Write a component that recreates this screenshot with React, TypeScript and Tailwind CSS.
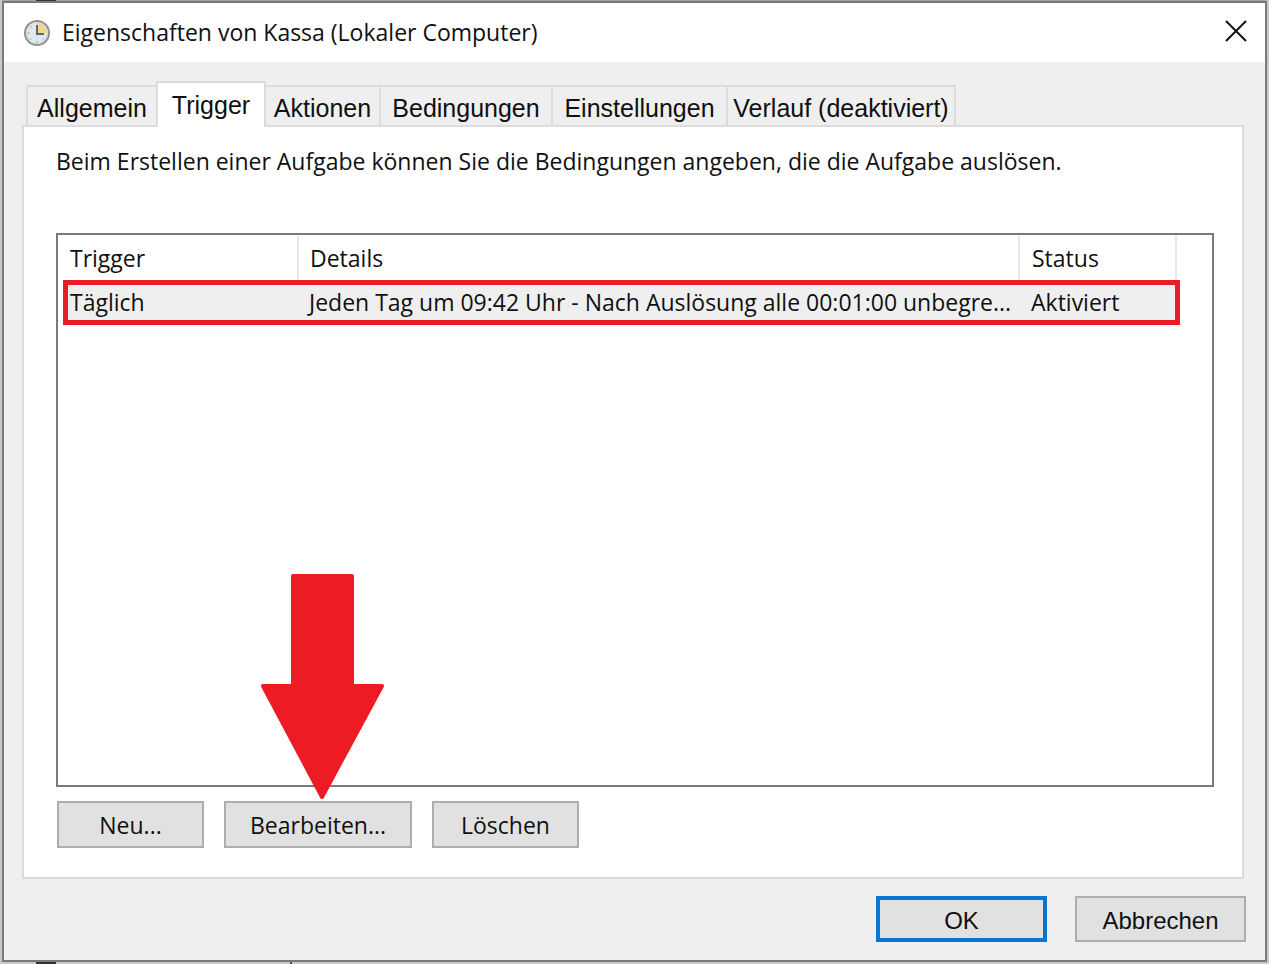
import { useState } from 'react';

const tabs = [
  { label: 'Allgemein', width: 'w-[132px]' },
  { label: 'Trigger', width: 'w-[110px]' },
  { label: 'Aktionen', width: 'w-[115px]' },
  { label: 'Bedingungen', width: 'w-[172px]' },
  { label: 'Einstellungen', width: 'w-[175px]' },
  { label: 'Verlauf (deaktiviert)', width: 'w-[228px]' },
];

const triggers = [
  {
    name: 'Täglich',
    details: 'Jeden Tag um 09:42 Uhr - Nach Auslösung alle 00:01:00 unbegre...',
    status: 'Aktiviert',
  },
];

const buttonBase = 'h-[47px] border-2 border-[#adadad] bg-[#e1e1e1]';

function ClockIcon() {
  return (
    <svg viewBox="0 0 28 28" className="h-7 w-7" aria-hidden="true">
      <circle cx="14" cy="14" r="12" fill="#dde9ef" stroke="#92928e" strokeWidth="2" />
      <path d="M14 14V3.500a10.500 10.500 0 0 1 10.500 10.500z" fill="#f5d48e" />
      <circle cx="14" cy="14" r="10.5" fill="none" stroke="#d3dbdd" strokeWidth="1" />
      <path d="M14 6v9h7" fill="none" stroke="#5b6670" strokeWidth="2" />
      <path d="M14 22v2M4.500 14h2M7.500 7.500l1 1M7.500 20.500l1-1M20.500 20.500l-1-1" stroke="#8e9ba3" strokeWidth="1" />
    </svg>
  );
}

function TitleBar() {
  return (
    <header className="flex h-[59px] items-center bg-white pl-[19px] pr-3.5">
      <ClockIcon />
      <h1 className="ml-[11px] flex-1 pb-0.5">Eigenschaften von Kassa (Lokaler Computer)</h1>
      <button type="button" aria-label="Schließen" className="p-1 pb-2">
        <svg viewBox="0 0 22 22" className="h-[22px] w-[22px]" aria-hidden="true">
          <path d="M1 1l20 20M21 1L1 21" stroke="#111" strokeWidth="2" />
        </svg>
      </button>
    </header>
  );
}

function TriggerList() {
  return (
    <div className="relative flex-1 border-2 border-[#7a7a7a] bg-white pl-[5px] pr-[35px]">
      <table className="w-full table-fixed border-collapse text-left">
        <thead>
          <tr className="h-[45px]">
            <th className="w-[235px] border-r-2 border-[#e8e8e8] pl-[7px] font-normal">Trigger</th>
            <th className="border-r-2 border-[#e8e8e8] pl-[11px] font-normal">Details</th>
            <th className="w-[157px] border-r-2 border-[#e8e8e8] pl-3 font-normal">Status</th>
          </tr>
        </thead>
        <tbody>
          {triggers.map((t) => (
            <tr key={t.name} className="h-[45px] bg-[#efefef]">
              <td className="pb-0.5 pl-[7px]">{t.name}</td>
              <td className="overflow-hidden whitespace-nowrap pb-0.5 pl-[11px]">{t.details}</td>
              <td className="pb-0.5 pl-3">{t.status}</td>
            </tr>
          ))}
        </tbody>
      </table>
      {/* marker around the selected trigger */}
      <div className="pointer-events-none absolute left-[5px] right-8 top-[45px] h-[45px] border-[5px] border-[#ea1c24]" />
    </div>
  );
}

function Arrow() {
  return (
    <svg
      viewBox="0 0 124 226"
      className="pointer-events-none absolute bottom-full left-9 mb-0.5 h-[226px] w-[124px]"
      aria-hidden="true"
    >
      <path
        d="M33 3h59v110h30L62 224 3 113h30z"
        fill="#ed1c24"
        stroke="#ed1c24"
        strokeWidth="4"
        strokeLinejoin="round"
      />
    </svg>
  );
}

export default function App() {
  const [active, setActive] = useState('Trigger');

  return (
    <div className="flex min-h-screen flex-col bg-[#c8c8c8] px-[2px] font-['Open_Sans','Noto_Sans',sans-serif] text-[23px] leading-7 text-[#101010]">
      <div className="flex h-px bg-[#a5a5a5] pl-[34px]">
        <div className="w-5 bg-[#333]" />
      </div>

      <div className="flex flex-1 flex-col border-2 border-[#7a7a7a] bg-[#efefef]">
        <TitleBar />

        <main className="flex flex-1 flex-col pl-[18px] pr-[21px] pt-[19px]">
          <div role="tablist" className="flex h-11 items-end pl-1 font-['Liberation_Sans',Arial,sans-serif] text-[25px]">
            {tabs.map((tab) => (
              <button
                key={tab.label}
                type="button"
                role="tab"
                aria-selected={tab.label === active}
                onClick={() => setActive(tab.label)}
                className={`${tab.width} whitespace-nowrap border-t-2 border-r-2 border-[#dcdcdc] first:border-l-2 ${
                  tab.label === active ? 'relative -mb-0.5 -ml-0.5 h-[46px] border-l-2 bg-white' : 'h-10 pt-1'
                }`}
              >
                {tab.label}
              </button>
            ))}
          </div>

          <section role="tabpanel" className="flex flex-1 flex-col border-2 border-[#dcdcdc] bg-white pb-[29px] pl-8 pr-7 pt-5">
            <p className="mb-[58px]">
              Beim Erstellen einer Aufgabe können Sie die Bedingungen angeben, die die Aufgabe auslösen.
            </p>
            <TriggerList />
            <div className="mt-3.5 flex gap-5 pl-px">
              <button type="button" className={`${buttonBase} w-[147px]`}>Neu...</button>
              <div className="relative">
                <button type="button" className={`${buttonBase} w-[188px]`}>Bearbeiten...</button>
                <Arrow />
              </div>
              <button type="button" className={`${buttonBase} w-[147px]`}>Löschen</button>
            </div>
          </section>
        </main>

        <footer className="flex justify-end gap-7 pb-[18px] pr-[19px] pt-[17px] font-['Liberation_Sans',Arial,sans-serif] text-[24px]">
          <button type="button" className="h-[46px] w-[171px] border-4 border-[#0a74d3] bg-[#e1e1e1] pt-1">OK</button>
          <button type="button" className="h-[46px] w-[171px] border-2 border-[#adadad] bg-[#e1e1e1] pt-1">Abbrechen</button>
        </footer>
      </div>

      <div className="flex h-0.5 bg-[#c8c8c8] pl-[34px]">
        <div className="w-5 bg-[#333]" />
        <div className="ml-[234px] w-0.5 bg-[#555]" />
      </div>
    </div>
  );
}
